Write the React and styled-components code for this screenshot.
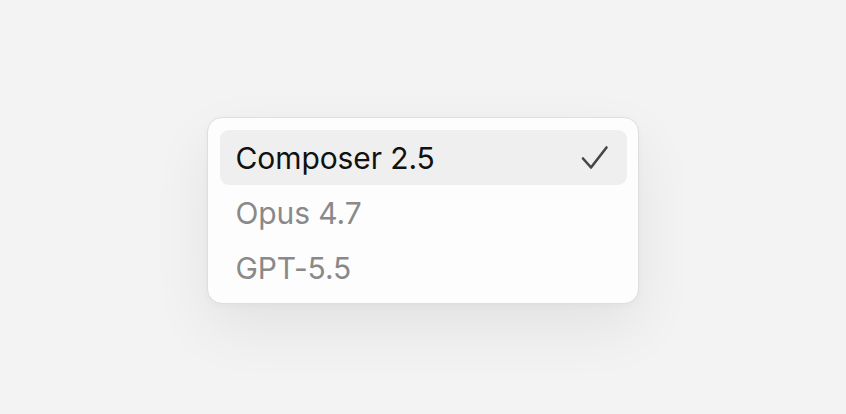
import React from 'react';
import styled, { createGlobalStyle } from 'styled-components';

const GlobalStyle = createGlobalStyle`
  html, body {
    margin: 0;
    padding: 0;
    background: #f3f3f3;
    font-family: Inter, "Noto Sans", sans-serif;
  }
`;

const Page = styled.div`
  min-height: 100vh;
  display: flex;
  align-items: center;
  justify-content: center;
  padding-top: 7px;
  box-sizing: border-box;
`;

const Menu = styled.ul`
  list-style: none;
  margin: 0 0 0 -1px;
  width: 432px;
  box-sizing: border-box;
  padding: 12px 11px 8px 12px;
  background: #fdfdfd;
  border: 1px solid #dedede;
  border-radius: 15px;
  box-shadow: 0 24px 60px rgba(0, 0, 0, 0.07), 0 2px 6px rgba(0, 0, 0, 0.03);
  display: flex;
  flex-direction: column;
`;

const Item = styled.li`
  height: 55px;
  display: flex;
  align-items: center;
  justify-content: space-between;
  padding: 0 17px 0 16px;
  border-radius: 9px;
  font-size: 30px;
  letter-spacing: -0.1px;
  color: ${p => (p.$active ? '#111111' : '#898989')};
  background: ${p => (p.$active ? '#efefef' : 'transparent')};
`;

const Check = () => (
  <svg width="30" height="28" viewBox="0 0 30 28" fill="none">
    <path
      d="M3 14.5 L11 23.5 L26.5 3.5"
      stroke="#464646"
      strokeWidth="2.6"
      strokeLinecap="round"
      strokeLinejoin="round"
    />
  </svg>
);

const models = ['Composer 2.5', 'Opus 4.7', 'GPT-5.5'];

export default function App() {
  const selected = 'Composer 2.5';
  return (
    <>
      <GlobalStyle />
      <Page>
        <Menu>
          {models.map(name => (
            <Item key={name} $active={name === selected}>
              <span>{name}</span>
              {name === selected && <Check />}
            </Item>
          ))}
        </Menu>
      </Page>
    </>
  );
}
